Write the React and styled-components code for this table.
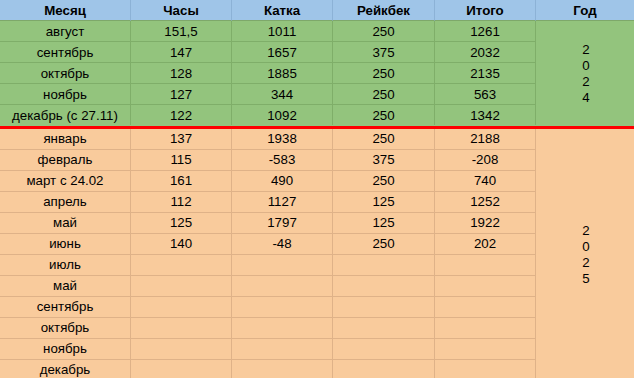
import React from "react";
import styled, { createGlobalStyle } from "styled-components";

const Global = createGlobalStyle`
  html, body { margin: 0; padding: 0; background: #ffffff; }
  body { font-family: "Liberation Sans", Arial, sans-serif; }
`;

const palettes = {
  head: { bg: "#9fc5e8", line: "#8cb2d6" },
  green: { bg: "#93c47d", line: "#7fae69" },
  orange: { bg: "#f9cb9c", line: "#dfb288" },
};

const Sheet = styled.div`
  width: 634px;
  height: 378px;
  overflow: hidden;
  display: flex;
  flex-direction: column;
`;

const Section = styled.div`
  display: grid;
  grid-template-columns: 131px 101px 101px 102px 101px 98px;
  grid-auto-rows: 21px;
  background: ${(p) => palettes[p.$tone].bg};
`;

const Cell = styled.div`
  box-sizing: border-box;
  border-right: ${(p) => (p.$last ? "none" : `1px solid ${palettes[p.$tone].line}`)};
  border-bottom: ${(p) =>
    p.$noBottom ? "none" : `1px solid ${p.$headLine ? "#7ea86a" : palettes[p.$tone].line}`};
  height: ${(p) => (p.$noBottom ? "20px" : "21px")};
  display: flex;
  align-items: center;
  justify-content: center;
  font-size: 13.3px;
  font-weight: ${(p) => (p.$bold ? 700 : 400)};
  color: #000;
  white-space: nowrap;
  padding-bottom: ${(p) => (p.$tone === "orange" ? "2px" : "0")};
`;

const YearCell = styled.div`
  box-sizing: border-box;
  grid-column: 6;
  grid-row: 1 / span ${(p) => p.$span};
  display: flex;
  flex-direction: column;
  align-items: center;
  justify-content: center;
  font-size: 13.3px;
  line-height: 16px;
  color: #000;
  padding-left: 2px;
  padding-top: ${(p) => p.$shift || 0}px;
`;

const Separator = styled.div`
  height: 3px;
  background: #ff0000;
  flex-shrink: 0;
`;

const headers = ["Месяц", "Часы", "Катка", "Рейкбек", "Итого", "Год"];

const rows2024 = [
  ["август", "151,5", "1011", "250", "1261"],
  ["сентябрь", "147", "1657", "375", "2032"],
  ["октябрь", "128", "1885", "250", "2135"],
  ["ноябрь", "127", "344", "250", "563"],
  ["декабрь (с 27.11)", "122", "1092", "250", "1342"],
];

const rows2025 = [
  ["январь", "137", "1938", "250", "2188"],
  ["февраль", "115", "-583", "375", "-208"],
  ["март с 24.02", "161", "490", "250", "740"],
  ["апрель", "112", "1127", "125", "1252"],
  ["май", "125", "1797", "125", "1922"],
  ["июнь", "140", "-48", "250", "202"],
  ["июль", "", "", "", ""],
  ["май", "", "", "", ""],
  ["сентябрь", "", "", "", ""],
  ["октябрь", "", "", "", ""],
  ["ноябрь", "", "", "", ""],
  ["декабрь", "", "", "", ""],
];

function YearBlock({ tone, rows, year, shift, lastNoBorder }) {
  return (
    <Section $tone={tone}>
      {rows.map((r, i) =>
        r.map((v, j) => (
          <Cell
            key={`${i}-${j}`}
            $tone={tone}
            $noBottom={lastNoBorder && i === rows.length - 1}
          >
            {v}
          </Cell>
        ))
      )}
      <YearCell $span={rows.length} $shift={shift}>
        {year.split("").map((d, k) => (
          <span key={k}>{d}</span>
        ))}
      </YearCell>
    </Section>
  );
}

export default function App() {
  return (
    <>
      <Global />
      <Sheet>
        <Section $tone="head">
          {headers.map((h, i) => (
            <Cell key={h} $tone="head" $bold $headLine $last={i === headers.length - 1}>
              {h}
            </Cell>
          ))}
        </Section>
        <YearBlock tone="green" rows={rows2024} year="2024" lastNoBorder />
        <Separator />
        <YearBlock tone="orange" rows={rows2025} year="2025" shift={-4} />
      </Sheet>
    </>
  );
}
